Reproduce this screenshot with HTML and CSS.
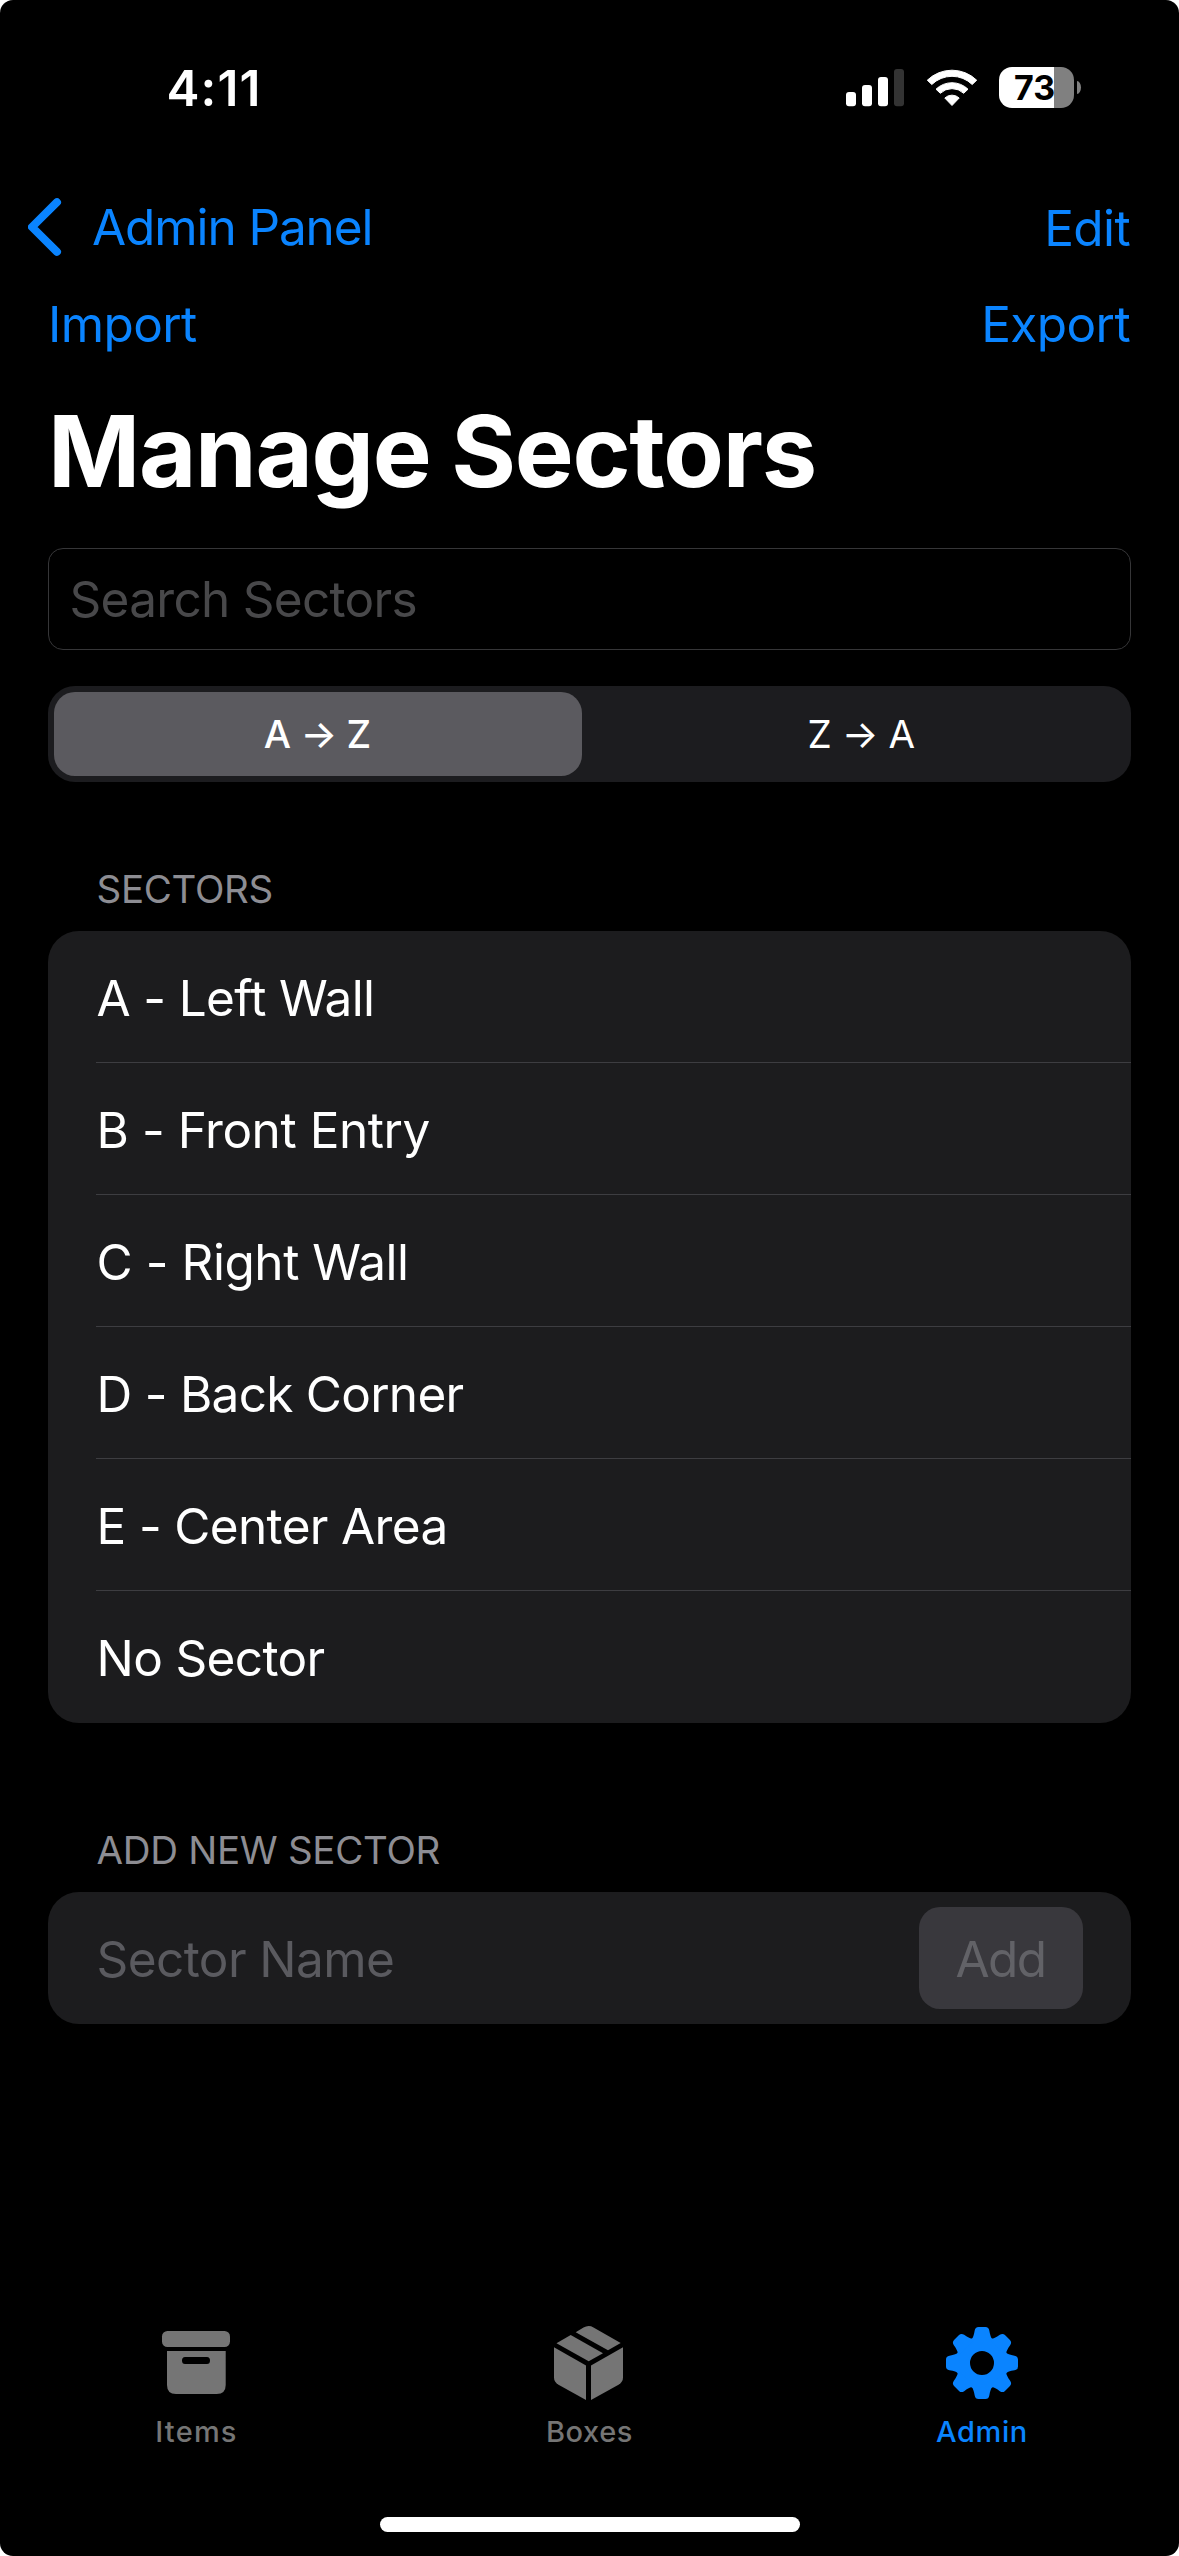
FILE: index.html
```
<!DOCTYPE html>
<html lang="en">
<head>
<meta charset="utf-8">
<title>Manage Sectors</title>
<link rel="stylesheet" href="styles.css">
</head>
<body>
<div class="screen">
  <header class="status">
    <span class="time">4:11</span>
    <div class="status-icons">
      <svg class="signal" width="58" height="38" viewBox="0 0 58 38" fill="#fff">
        <rect x="0" y="23" width="10" height="14.300" rx="3"/>
        <rect x="16" y="16" width="10" height="21.300" rx="3"/>
        <rect x="32" y="8" width="10" height="29.300" rx="3"/>
        <rect x="48" y="0" width="10" height="37.300" rx="3" fill="#333"/>
      </svg>
      <svg class="wifi" width="52" height="38" viewBox="0 0 52 38" fill="#fff" stroke="#fff" stroke-width="1" stroke-linejoin="round">
        <path d="M1.300 11.200A35.500 35.500 0 0 1 50.700 11.200L46.200 15.500A29 29 0 0 0 5.800 15.500Z"/>
        <path d="M10 20.200A23 23 0 0 1 42 20.200L37.700 24.300A17 17 0 0 0 14.300 24.300Z"/>
        <path d="M18.800 29A10.500 10.500 0 0 1 33.200 29L26 36.500Z"/>
      </svg>
      <div class="battery"><span class="battery-level">73</span></div>
      <span class="battery-cap"></span>
    </div>
  </header>

  <nav class="nav">
    <a class="back">
      <svg width="37" height="60" viewBox="0 0 37 60" fill="none" stroke="#0a84ff" stroke-width="8" stroke-linecap="round" stroke-linejoin="round"><path d="M29 5.200L4 30L29 54.800"/></svg>
      <span class="back-label">Admin Panel</span>
    </a>
    <a class="link edit">Edit</a>
  </nav>
  <div class="actions">
    <a class="link">Import</a>
    <a class="link">Export</a>
  </div>

  <h1 class="title">Manage Sectors</h1>

  <div class="search">Search Sectors</div>

  <div class="segmented">
    <div class="segment selected">A → Z</div>
    <div class="segment">Z → A</div>
  </div>

  <h2 class="section-header sectors-header">SECTORS</h2>
  <ul class="card">
    <li class="row"><span class="row-text">A - Left Wall</span></li>
    <li class="row"><span class="row-text front">B - Front Entry</span></li>
    <li class="row"><span class="row-text front">C - Right Wall</span></li>
    <li class="row"><span class="row-text corner">D - Back Corner</span></li>
    <li class="row"><span class="row-text">E - Center Area</span></li>
    <li class="row"><span class="row-text">No Sector</span></li>
  </ul>

  <h2 class="section-header add-header">ADD NEW SECTOR</h2>
  <div class="card add-row">
    <span class="placeholder">Sector Name</span>
    <span class="add-button">Add</span>
  </div>

  <footer class="tabbar">
    <div class="tabs">
      <div class="tab">
        <svg width="80" height="80" viewBox="1 0 80 80" fill="#757575">
          <rect x="6" y="8" width="68" height="16" rx="5.500"/>
          <path fill-rule="evenodd" d="M11 28H69.700V62Q69.700 71 60.700 71H20Q11 71 11 62ZM29 34Q26 34 26 37.500Q26 41 29 41H51Q54 41 54 37.500Q54 34 51 34Z"/>
        </svg>
        <span class="tab-label items">Items</span>
      </div>
      <div class="tab">
        <svg width="80" height="80" viewBox="30 23 80 80" fill="#757575">
          <path d="M34 47.300L66 65.500V100L38.500 84.800Q34 82 34 77.500Z"/>
          <path d="M103 47.300L71 65.500V100L98.500 84.800Q103 82 103 77.500Z"/>
          <path d="M50.700 35L83 53.200L68.700 61.300L36.500 43.300Z"/>
          <path d="M55.700 32.200L63.500 27.600Q68.500 24.500 73.500 27.400L100.700 42.900L88 50.300Z"/>
        </svg>
        <span class="tab-label">Boxes</span>
      </div>
      <div class="tab active">
        <svg width="80" height="80" viewBox="-39 -40 80 80" fill="#0a84ff">
          <defs><path id="tooth" d="M-11 -22C-9 -25.500 -8 -28 -7.300 -32.500Q-6.700 -36 -3.500 -36H3.500Q6.700 -36 7.300 -32.500C8 -28 9 -25.500 11 -22Z"/></defs>
          <circle r="19.250" fill="none" stroke="#0a84ff" stroke-width="14.500"/>
          <use href="#tooth"/>
          <use href="#tooth" transform="rotate(45)"/>
          <use href="#tooth" transform="rotate(90)"/>
          <use href="#tooth" transform="rotate(135)"/>
          <use href="#tooth" transform="rotate(180)"/>
          <use href="#tooth" transform="rotate(225)"/>
          <use href="#tooth" transform="rotate(270)"/>
          <use href="#tooth" transform="rotate(315)"/>
        </svg>
        <span class="tab-label admin">Admin</span>
      </div>
    </div>
    <div class="home-indicator"></div>
  </footer>
</div>
</body>
</html>
```
FILE: styles.css
```
* { box-sizing: border-box; }

body {
  margin: 0;
  background: #fff;
  font-family: Inter, "Liberation Sans", sans-serif;
  font-size: 49.5px;
  color: #fff;
}

.screen {
  width: 1179px;
  height: 2556px;
  display: flex;
  flex-direction: column;
  background: #000;
  border-radius: 13px;
  overflow: hidden;
  white-space: nowrap;
}

.status {
  height: 176px;
  padding: 0 98px 0 166.5px;
  display: flex;
  align-items: center;
  justify-content: space-between;
}
.time { font-weight: 600; letter-spacing: 1.1px; }
.status-icons { display: flex; align-items: center; }
.wifi { margin-left: 21.5px; }
.battery {
  width: 75px;
  height: 41px;
  margin: 0 0 1px 21.5px;
  border-radius: 13px;
  overflow: hidden;
  background: linear-gradient(to right, #fff 55px, #808080 55px);
  display: flex;
  align-items: center;
  padding-left: 15px;
}
.battery-level {
  color: #000;
  font-size: 34px;
  font-weight: 700;
  line-height: 41px;
}
.battery-cap {
  width: 4px;
  height: 13px;
  margin: 0 0 1px 3px;
  background: #808080;
  border-radius: 0 4px 4px 0 / 0 6.5px 6.5px 0;
}

.nav, .actions {
  display: flex;
  align-items: center;
  justify-content: space-between;
  color: #0a84ff;
  padding: 0 49px 0 28px;
}
.nav { height: 102px; }
.actions { height: 92px; padding-left: 48px; }
.back { display: flex; align-items: center; gap: 27px; }
.back-label { letter-spacing: -1.1px; }
.link { letter-spacing: -0.6px; }
.edit { padding-top: 2px; }

.title {
  margin: 0;
  height: 162px;
  line-height: 162px;
  padding-left: 48px;
  font-size: 99px;
  font-weight: 700;
  letter-spacing: -1.3px;
  word-spacing: -1.5px;
}

.search {
  margin: 16px 48px 0;
  height: 102px;
  line-height: 101px;
  padding: 0 20.5px;
  border: 1px solid #363638;
  border-radius: 15px;
  color: #48484a;
  letter-spacing: -0.7px;
}

.segmented {
  margin: 36px 48px 0;
  height: 96px;
  padding: 6px;
  display: flex;
  background: #1c1c1f;
  border-radius: 27px;
}
.segment {
  width: 528px;
  margin-right: 15px;
  line-height: 84px;
  text-align: center;
  font-size: 38.5px;
  letter-spacing: -0.4px;
}
.segment:last-child { margin-right: 0; }
.selected {
  background: #5b5a5f;
  border-radius: 21px;
  padding-right: 1.5px;
  font-weight: 500;
}

.section-header {
  margin: 0;
  height: 84px;
  line-height: 84px;
  padding-left: 96.5px;
  font-size: 38.5px;
  font-weight: 400;
  letter-spacing: -0.3px;
  color: #8d8d93;
}
.sectors-header { margin-top: 65px; }
.add-header { margin-top: 85px; }

.card {
  margin: 0 48px;
  padding: 0;
  list-style: none;
  background: #1c1c1e;
  border-radius: 31px;
  overflow: hidden;
}
.row {
  height: 132px;
  margin-left: 48px;
  padding: 2px 0 0 0.5px;
  line-height: 131px;
  border-bottom: 1px solid #3d3d41;
}
.row:last-child { border-bottom: 0; }
.row-text { letter-spacing: -0.65px; }
.front { letter-spacing: -0.45px; }
.corner { letter-spacing: -0.73px; }

.add-row {
  height: 132px;
  padding: 0 48px;
  display: flex;
  align-items: center;
  justify-content: space-between;
}
.placeholder { color: #5a5a5f; letter-spacing: -0.58px; padding: 2px 0 0 0.5px; }
.add-button {
  width: 164px;
  height: 102px;
  line-height: 104px;
  padding-right: 1px;
  text-align: center;
  background: #39383d;
  border-radius: 21px;
  color: #626267;
  letter-spacing: -1.6px;
}

.tabbar {
  margin-top: auto;
  height: 233px;
  display: flex;
  flex-direction: column;
  align-items: center;
  color: #757575;
}
.tabs {
  width: 100%;
  display: grid;
  grid-template-columns: repeat(3, 1fr);
}
.tab { display: flex; flex-direction: column; align-items: center; }
.active { color: #0a84ff; }
.tab-label {
  margin-top: 10px;
  line-height: 37px;
  font-size: 29px;
  font-weight: 500;
  letter-spacing: 0.6px;
}
.items { letter-spacing: 1.2px; }
.admin { padding-right: 1px; }
.home-indicator {
  width: 420px;
  height: 15px;
  margin-top: 67px;
  border-radius: 8px;
  background: #fff;
}
```
